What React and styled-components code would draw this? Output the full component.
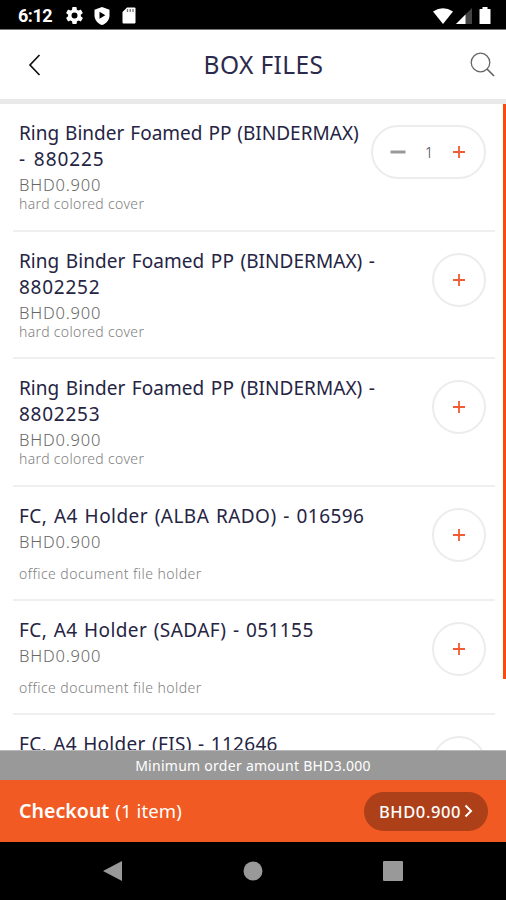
import React from "react";
import styled, { createGlobalStyle } from "styled-components";

const Global = createGlobalStyle`
  * { box-sizing: border-box; }
  body { margin: 0; background: #fff; font-family: "Noto Sans", sans-serif; }
  button { font: inherit; color: inherit; border: 0; padding: 0; background: none; }
`;

const Screen = styled.div`
  width: 506px;
  height: 900px;
  display: flex;
  flex-direction: column;
  overflow: hidden;
  background: #fff;
`;

const StatusBar = styled.div`
  height: 30px;
  flex: none;
  display: flex;
  align-items: center;
  justify-content: space-between;
  background: #000;
  border-bottom: 1px solid #777;
  padding: 2px 15px 0 18px;
`;

const StatusGroup = styled.div`
  display: flex;
  align-items: center;
`;

const Clock = styled.span`
  width: 48px;
  color: #fff;
  font: 700 18px/20px Roboto, sans-serif;
  letter-spacing: -0.5px;
`;

const StatusIcon = styled.svg`
  display: block;
  margin-right: ${(p) => p.$gap || 0}px;
`;

const Header = styled.header`
  height: 74px;
  flex: none;
  display: grid;
  grid-template-columns: 60px 1fr 60px;
  align-items: center;
  border-bottom: 5px solid #e9e9e9;
`;

const Title = styled.h1`
  margin: 0;
  text-align: center;
  font-size: 24.5px;
  line-height: 32px;
  font-weight: 400;
  color: #2b2a4c;
  letter-spacing: 0.4px;
  padding-left: 21px;
  white-space: nowrap;
`;

const HeaderButton = styled.button`
  display: flex;
  justify-content: ${(p) => (p.$end ? "flex-end" : "flex-start")};
  padding: ${(p) => (p.$end ? "0 11px 0 0" : "0 0 0 28px")};
`;

const ListArea = styled.main`
  position: relative;
  height: 646px;
  flex: none;
  overflow: hidden;
`;

const ScrollThumb = styled.div`
  position: absolute;
  top: 0;
  right: 0;
  width: 3px;
  height: 575px;
  background: #fb4a0c;
`;

const Row = styled.article`
  height: ${(p) => p.$height}px;
  margin: 0 11px 0 13px;
  padding: 16px 9px 0 6px;
  border-bottom: 2px solid #efefef;
  display: flex;
  justify-content: space-between;
  align-items: flex-start;
`;

const Details = styled.div`
  flex: 1;
  min-width: 0;
`;

const NameLine = styled.div`
  font-size: 19px;
  line-height: 26px;
  color: #252443;
  white-space: nowrap;
  letter-spacing: ${(p) => p.$spacing}px;
  word-spacing: ${(p) => p.$gap || 0}px;
`;

const Price = styled.div`
  font-size: 16.5px;
  line-height: 25px;
  font-weight: 300;
  color: #666;
  letter-spacing: 0.8px;
`;

const Description = styled.div`
  margin-top: ${(p) => p.$gap}px;
  font-size: 14px;
  line-height: 14px;
  font-weight: 300;
  color: #808080;
  letter-spacing: ${(p) => p.$spacing}px;
`;

const Stepper = styled.div`
  width: ${(p) => (p.$wide ? 115 : 54)}px;
  height: 54px;
  margin-top: 5px;
  flex: none;
  border: 2px solid #ececec;
  border-radius: 27px;
  display: flex;
  align-items: center;
  justify-content: ${(p) => (p.$wide ? "space-between" : "center")};
  padding: ${(p) => (p.$wide ? "0 18px 0 17px" : "0")};
`;

const StepButton = styled.button`
  display: block;
`;

const Count = styled.span`
  font-size: 15px;
  font-weight: 300;
  line-height: 20px;
  color: #444;
`;

const Notice = styled.div`
  height: 30px;
  flex: none;
  border-top: 1px solid #b8b8b8;
  background: #999;
  color: #fff;
  font-size: 14px;
  line-height: 30px;
  text-align: center;
  letter-spacing: 0.27px;
`;

const CheckoutBar = styled.div`
  height: 62px;
  flex: none;
  display: flex;
  align-items: center;
  justify-content: space-between;
  padding: 0 18px 0 19px;
  background: #f15a22;
  color: #fff;
`;

const CheckoutLabel = styled.div`
  display: flex;
  align-items: baseline;
  gap: 6px;
  font-size: 19.5px;
  line-height: 28px;
`;

const Strong = styled.span`
  font-weight: 600;
  letter-spacing: 0.05px;
`;

const ItemCount = styled.span`
  font-size: 18.5px;
  letter-spacing: 0.1px;
`;

const Total = styled.button`
  width: 124px;
  height: 39px;
  border-radius: 20px;
  background: #ae4019;
  color: #fff;
  display: flex;
  align-items: center;
  justify-content: center;
  gap: 3px;
  font-size: 16.5px;
  font-weight: 500;
  letter-spacing: 0.6px;
`;

const NavBar = styled.nav`
  flex: 1;
  background: #000;
  display: flex;
  justify-content: center;
  align-items: center;
  gap: 118px;
`;

const name = "Ring Binder Foamed PP (BINDERMAX)";
const items = [
  { lines: [[name, 0, 1], ["- 880225", 0.9, 2]], desc: "hard colored cover", ds: 0.35, height: 128, gap: 0, count: 1 },
  { lines: [[name + " -", 0.05, 1.5], ["8802252", 0.75]], desc: "hard colored cover", ds: 0.35, height: 127, gap: 0 },
  { lines: [[name + " -", 0.05, 1.5], ["8802253", 0.75]], desc: "hard colored cover", ds: 0.35, height: 128, gap: 0 },
  { lines: [["FC, A4 Holder (ALBA RADO) - 016596", 0.45, 1.3]], desc: "office document file holder", ds: 0.45, height: 114, gap: 13 },
  { lines: [["FC, A4 Holder (SADAF) - 051155", 0.42, 1.1]], desc: "office document file holder", ds: 0.45, height: 114, gap: 13 },
  { lines: [["FC, A4 Holder (FIS) - 112646", 0.3, 1.1]], height: 114 },
];

function Plus() {
  return (
    <StepButton aria-label="Add">
      <svg width="14" height="14" viewBox="0 0 14 14" display="block" stroke="#f15a32" strokeWidth="1.8">
        <path d="M7 1v12M1 7h12" />
      </svg>
    </StepButton>
  );
}

function Minus() {
  return (
    <StepButton aria-label="Remove">
      <svg width="16" height="14" viewBox="0 0 16 14" display="block" stroke="#999" strokeWidth="3">
        <path d="M0.5 7h15" />
      </svg>
    </StepButton>
  );
}

function Item({ item }) {
  return (
    <Row $height={item.height}>
      <Details>
        {item.lines.map(([text, spacing, gap]) => (
          <NameLine key={text} $spacing={spacing} $gap={gap}>{text}</NameLine>
        ))}
        {item.desc && (
          <>
            <Price>BHD0.900</Price>
            <Description $gap={item.gap} $spacing={item.ds}>{item.desc}</Description>
          </>
        )}
      </Details>
      <Stepper $wide={!!item.count}>
        {item.count && <><Minus /><Count>{item.count}</Count></>}
        <Plus />
      </Stepper>
    </Row>
  );
}

export default function App() {
  return (
    <Screen>
      <Global />
      <StatusBar>
        <StatusGroup>
          <Clock>6:12</Clock>
          <StatusIcon $gap={11} width="17" height="17" viewBox="2 2 20 20" fill="#fff">
            <path fillRule="evenodd" d="M19.4 13a7.800 7.800 0 0 0 0-2l2.100-1.600a.5.5 0 0 0 .1-.6l-2-3.500a.5.5 0 0 0-.6-.2l-2.500 1a7.300 7.300 0 0 0-1.700-1l-.4-2.600a.5.5 0 0 0-.5-.4h-4a.5.5 0 0 0-.5.4L9.100 5.100a7.700 7.700 0 0 0-1.700 1l-2.500-1a.5.5 0 0 0-.6.2l-2 3.500a.5.5 0 0 0 .1.6L4.500 11a7.900 7.900 0 0 0 0 2l-2.100 1.600a.5.5 0 0 0-.1.6l2 3.500c.1.200.4.300.6.200l2.500-1a7.300 7.300 0 0 0 1.700 1l.4 2.600c0 .2.200.4.500.4h4c.200 0 .5-.2.5-.4l.4-2.600a7.700 7.700 0 0 0 1.700-1l2.500 1c.2.100.5 0 .6-.2l2-3.500a.5.5 0 0 0-.1-.6zM12 15.500a3.500 3.500 0 1 1 0-7 3.500 3.500 0 0 1 0 7z" />
          </StatusIcon>
          <StatusIcon $gap={12} width="16" height="18" viewBox="0 0 16 18">
            <path d="M8 0l7.500 2.700v5.500c0 4.600-3 8.300-7.500 9.800C3.500 16.500.5 12.800.5 8.200V2.700z" fill="#fff" />
            <path d="M5.500 4.700v7L11.300 8.200z" fill="#000" />
          </StatusIcon>
          <StatusIcon width="14" height="17" viewBox="0 0 14 17">
            <path d="M5 .5h7.500q1 0 1 1v14q0 1-1 1h-11q-1 0-1-1V5z" fill="#fff" />
            <path d="M5.500 2v3M8.200 2v3M11 2v3" stroke="#777" strokeWidth="1.300" />
          </StatusIcon>
        </StatusGroup>
        <StatusGroup>
          <StatusIcon $gap={3} width="20" height="16" viewBox="0 0 20 16">
            <path d="M0 3.500Q10-3 20 3.500L10 16z" fill="#fff" />
          </StatusIcon>
          <StatusIcon $gap={7} width="16" height="16" viewBox="0 0 16 16">
            <path d="M16 0v16H0z" fill="#444" />
            <path d="M9.500 6.500V16H0z" fill="#fff" />
          </StatusIcon>
          <StatusIcon width="12" height="17" viewBox="0 0 12 17">
            <path d="M3.500 0h5v2H11q.5 0 .5.5v14q0 .5-.5.5H1q-.5 0-.5-.5v-14Q.5 2 1 2h2.500z" fill="#fff" />
          </StatusIcon>
        </StatusGroup>
      </StatusBar>

      <Header>
        <HeaderButton aria-label="Back">
          <svg width="14" height="22" viewBox="0 0 14 22" fill="none" stroke="#111" strokeWidth="1.700">
            <path d="M11.500 1L2 11l9.500 10" />
          </svg>
        </HeaderButton>
        <Title>BOX FILES</Title>
        <HeaderButton $end aria-label="Search">
          <svg width="25" height="25" viewBox="0 0 25 25" fill="none" stroke="#666" strokeWidth="1.300">
            <circle cx="10.500" cy="10.500" r="9.300" />
            <path d="M17 17l7 7" strokeWidth="1.700" />
          </svg>
        </HeaderButton>
      </Header>

      <ListArea>
        {items.map((item, i) => <Item key={i} item={item} />)}
        <ScrollThumb />
      </ListArea>

      <Notice>Minimum order amount BHD3.000</Notice>
      <CheckoutBar>
        <CheckoutLabel>
          <Strong>Checkout</Strong>
          <ItemCount>(1 item)</ItemCount>
        </CheckoutLabel>
        <Total>
          <span>BHD0.900</span>
          <svg width="9" height="14" viewBox="0 0 9 14" fill="none" stroke="#fff" strokeWidth="2">
            <path d="M1.500 1.500L7 7l-5.500 5.500" />
          </svg>
        </Total>
      </CheckoutBar>
      <NavBar>
        <svg width="22" height="22" viewBox="0 0 22 22"><path d="M1 11L20 1v20z" fill="#999" /></svg>
        <svg width="22" height="22" viewBox="0 0 22 22"><circle cx="11" cy="11" r="9.500" fill="#999" /></svg>
        <svg width="22" height="22" viewBox="0 0 22 22"><rect x="1" y="1" width="20" height="20" rx="1" fill="#999" /></svg>
      </NavBar>
    </Screen>
  );
}
